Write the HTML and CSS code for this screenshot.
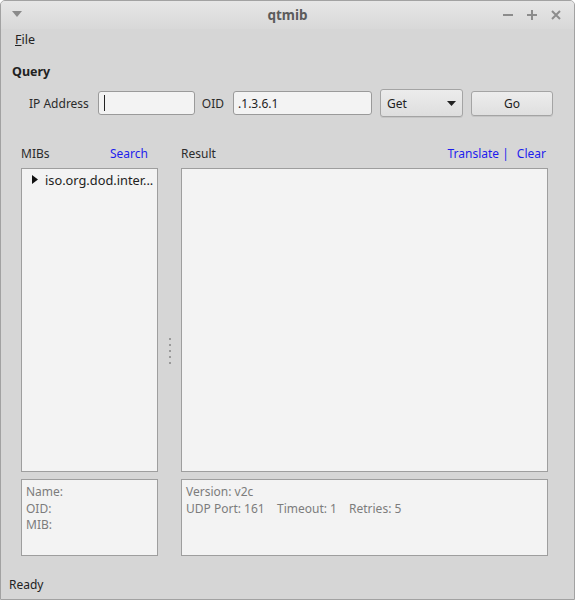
FILE: index.html
```html
<!DOCTYPE html>
<html>
<head>
<meta charset="utf-8">
<link rel="stylesheet" href="styles.css">
</head>
<body>
<div class="window">
  <div class="titlebar">
    <span class="menu-arrow"><svg width="10" height="6" viewBox="0 0 10 6"><path d="M0 0H10L5 6Z" fill="#8a8a8a"/></svg></span>
    <span class="title">qtmib</span>
    <span class="wbtns">
      <svg width="12" height="12" viewBox="0 0 12 12"><rect x="1" y="5" width="10" height="2" fill="#8c8c8c"/></svg>
      <svg width="12" height="12" viewBox="0 0 12 12"><rect x="1" y="5" width="10" height="2" fill="#8c8c8c"/><rect x="5" y="1" width="2" height="10" fill="#8c8c8c"/></svg>
      <svg width="12" height="12" viewBox="0 0 12 12"><path d="M2 2L10 10M10 2L2 10" stroke="#8c8c8c" stroke-width="2"/></svg>
    </span>
  </div>
  <div class="menubar"><span class="menuitem"><u>F</u>ile</span></div>
  <div class="query">
    <div class="qtitle">Query</div>
    <div class="qrow">
      <span class="lbl lbl-ip">IP Address</span>
      <span class="input input-ip"><span class="caret"></span></span>
      <span class="lbl lbl-oid">OID</span>
      <span class="input input-oid">.1.3.6.1</span>
      <span class="combo">Get<svg width="9" height="5" viewBox="0 0 9 5"><path d="M0 0H9L4.5 5Z" fill="#222"/></svg></span>
      <span class="button">Go</span>
    </div>
  </div>
  <div class="panes">
    <div class="col col-left">
      <div class="head"><span>MIBs</span><span class="link">Search</span></div>
      <div class="box tree">
        <div class="treeitem"><svg width="6" height="9" viewBox="0 0 6 9"><path d="M0 0V9L6 4.5Z" fill="#111"/></svg><span>iso.org.dod.inter...</span></div>
      </div>
      <div class="box info">
        <div>Name:</div>
        <div>OID:</div>
        <div>MIB:</div>
      </div>
    </div>
    <div class="splitter">
      <div class="dots"><i></i><i></i><i></i><i></i><i></i></div>
    </div>
    <div class="col col-right">
      <div class="head"><span>Result</span><span class="links"><span class="link">Translate |</span><span class="link">Clear</span></span></div>
      <div class="box result"></div>
      <div class="box info">
        <div>Version: v2c</div>
        <div class="params"><span>UDP Port: 161</span><span>Timeout: 1</span><span>Retries: 5</span></div>
      </div>
    </div>
  </div>
  <div class="status">Ready</div>
</div>
</body>
</html>
```
FILE: styles.css
```css
html, body {
  margin: 0;
  padding: 0;
  background: #ffffff;
}
body {
  font-family: "Noto Sans", "Open Sans", sans-serif;
  font-size: 12px;
  color: #2b2b2b;
}
.window {
  box-sizing: border-box;
  width: 575px;
  height: 600px;
  border: 1px solid #a2a2a2;
  border-radius: 5px 5px 0 0;
  background: #d6d6d6;
  display: flex;
  flex-direction: column;
  overflow: hidden;
}
.titlebar {
  height: 28px;
  flex: none;
  background: linear-gradient(#e6e6e6, #d8d8d8);
  display: flex;
  align-items: center;
  position: relative;
}
.menu-arrow {
  display: flex;
  margin-left: 11px;
  margin-top: -3px;
}
.title {
  position: absolute;
  left: 0;
  right: 0;
  text-align: center;
  font-weight: bold;
  font-size: 13.5px;
  color: #5b5b5b;
  top: 5px;
}
.wbtns {
  margin-left: auto;
  margin-right: 12px;
  display: flex;
  gap: 12px;
  margin-top: -1px;
}
.menubar {
  height: 21px;
  flex: none;
  display: flex;
  align-items: center;
  padding-left: 14px;
}
.menuitem {
  font-size: 12.5px;
  color: #222;
}
.query {
  padding-left: 11px;
  padding-top: 14px;
}
.qtitle {
  font-weight: bold;
  font-size: 12.5px;
  line-height: 16px;
  color: #222;
}
.qrow {
  display: flex;
  align-items: center;
  height: 28px;
  margin-top: 9px;
  padding-left: 17px;
}
.lbl {
  font-size: 12px;
  color: #2b2b2b;
}
.lbl-ip { margin-right: 9px; }
.lbl-oid { margin-left: 7px; margin-right: 9px; }
.input {
  box-sizing: border-box;
  height: 24px;
  border: 1px solid #9a9a9a;
  border-radius: 3px;
  background: #f3f3f3;
  display: flex;
  align-items: center;
  padding-left: 4px;
  font-size: 12px;
  color: #222;
}
.input-ip { width: 97px; }
.input-oid { width: 139px; }
.caret {
  width: 1px;
  height: 16px;
  background: #222;
  margin-left: 1px;
}
.combo {
  box-sizing: border-box;
  width: 83px;
  height: 28px;
  margin-left: 8px;
  border: 1px solid #a4a4a4;
  border-radius: 3px;
  background: linear-gradient(#ececec, #dedede);
  display: flex;
  align-items: center;
  justify-content: space-between;
  padding: 0 6px 0 6px;
  font-size: 12px;
  color: #222;
  box-shadow: 0 1px 0 rgba(0,0,0,0.08);
}
.button {
  box-sizing: border-box;
  width: 82px;
  height: 25px;
  margin-left: 8px;
  border: 1px solid #a4a4a4;
  border-radius: 3px;
  background: linear-gradient(#ededed, #dfdfdf);
  display: flex;
  align-items: center;
  justify-content: center;
  font-size: 12px;
  color: #222;
  box-shadow: 0 1px 0 rgba(0,0,0,0.08);
}
.panes {
  display: flex;
  margin-top: 28px;
  padding-left: 20px;
  height: 411px;
}
.col {
  display: flex;
  flex-direction: column;
}
.col-left { width: 137px; }
.col-right { width: 367px; }
.head {
  height: 17px;
  display: flex;
  justify-content: space-between;
  align-items: center;
  font-size: 12px;
  margin-bottom: 6px;
}
.col-left .head { padding-right: 10px; }
.col-right .head { padding-right: 2px; }
.link { color: #1d1ded; }
.links { display: flex; gap: 8px; }
.box {
  box-sizing: border-box;
  border: 1px solid #9e9e9e;
  background: #f3f3f3;
}
.tree, .result {
  height: 304px;
}
.info {
  height: 77px;
  margin-top: 7px;
  padding: 4px 4px;
  color: #7c7c7c;
  font-size: 12px;
  line-height: 16.7px;
}
.treeitem {
  display: flex;
  align-items: center;
  gap: 7px;
  padding-left: 10px;
  height: 21px;
  margin-top: 0;
  color: #222;
  font-size: 12.8px;
}
.params { display: flex; gap: 0; }
.params span:nth-child(1) { width: 91px; }
.params span:nth-child(2) { width: 72px; }
.splitter {
  width: 23px;
  display: flex;
  align-items: center;
  justify-content: center;
}
.dots {
  display: flex;
  flex-direction: column;
  gap: 4px;
  margin-left: 1px;
}
.dots i {
  display: block;
  width: 2px;
  height: 2px;
  background: #9a9a9a;
}
.status {
  margin-top: auto;
  height: 28px;
  padding-left: 8px;
  display: flex;
  align-items: center;
  font-size: 12px;
  color: #222;
  margin-bottom: 1px;
}
```
